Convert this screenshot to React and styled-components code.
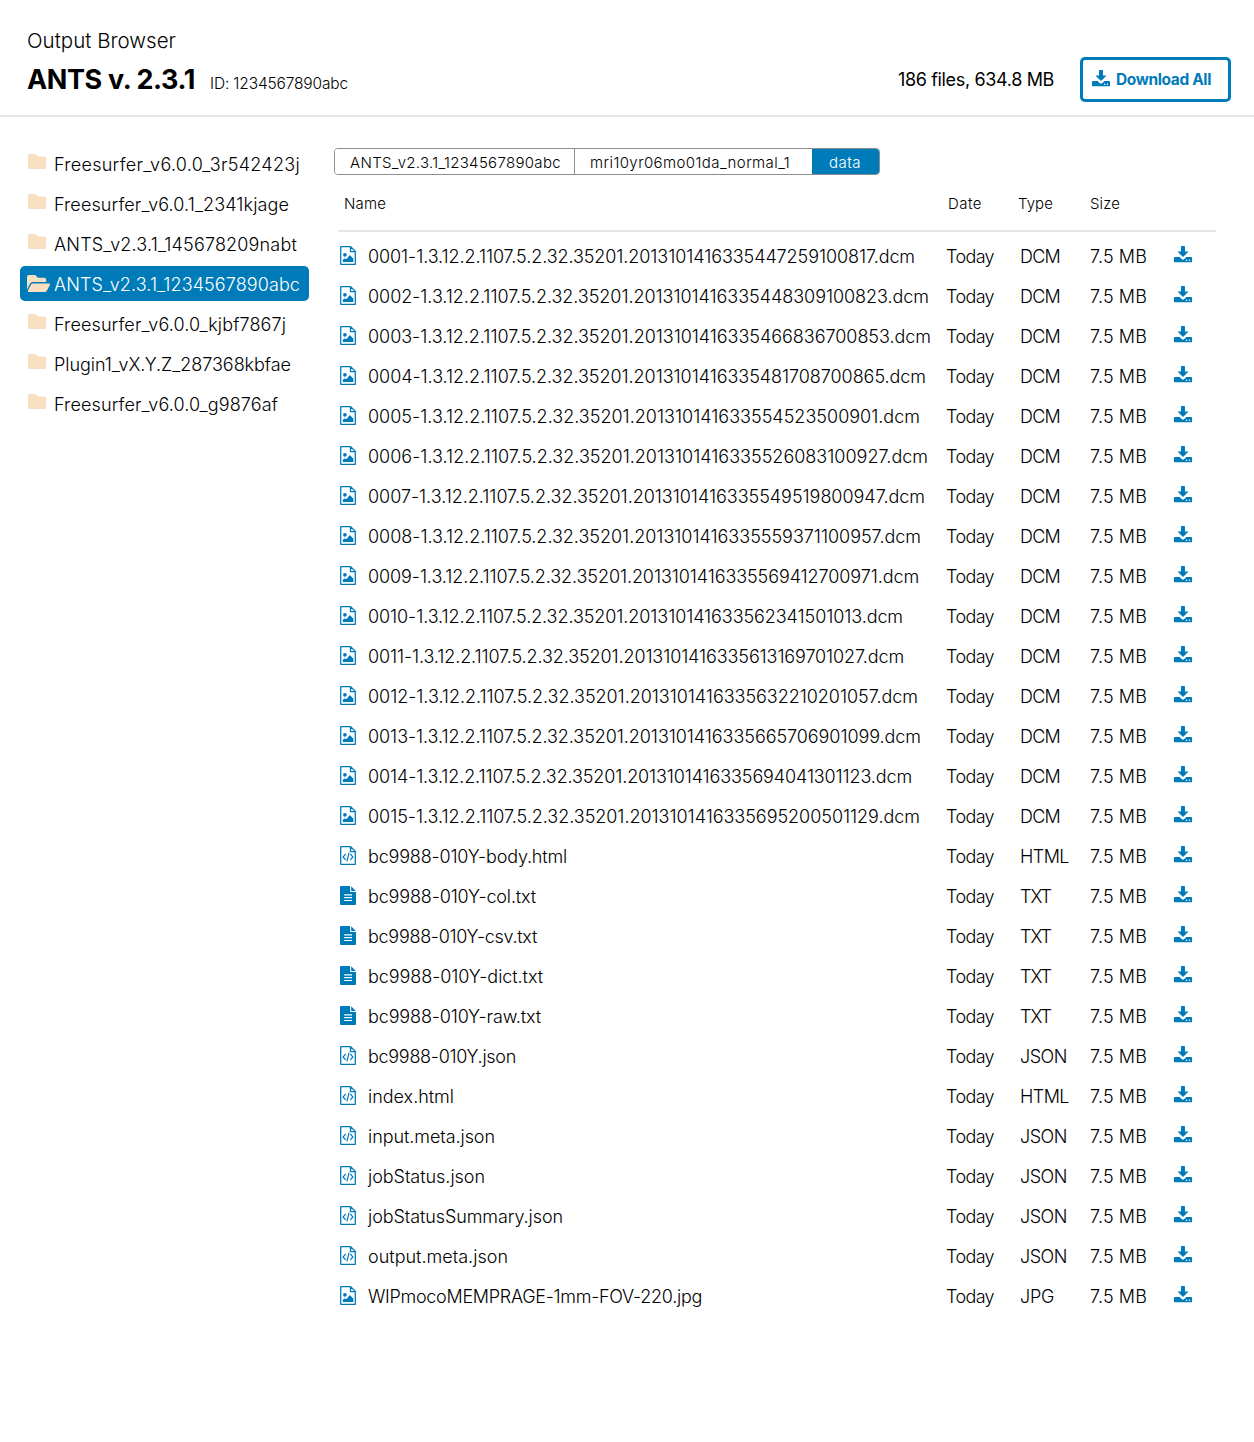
import React, { useLayoutEffect, useRef, useState } from "react";
import styled, { createGlobalStyle, css } from "styled-components";
import { FaFolder, FaFolderOpen } from "react-icons/fa";

const BLUE = "#007bba";
const SAND = "#f7dfbf";
const LINE = "#e6e6e6";

const GlobalStyle = createGlobalStyle`
  * { box-sizing: border-box; }
  body {
    margin: 0;
    background: #fff;
    color: #000;
    font-family: Inter, "Noto Sans", sans-serif;
  }
`;

const Page = styled.div`
  width: 1254px;
  min-height: 1442px;
  background: #fff;
`;

const Label = styled.span`
  display: inline-block;
  justify-self: start;
  padding-top: 2px;
  white-space: nowrap;
  font-size: ${(p) => p.$size || 18}px;
  font-weight: ${(p) => p.$weight || 300};
  line-height: ${(p) => p.$line || 24}px;
`;

function Tracked({ span, children, ...rest }) {
  const ref = useRef(null);
  const [spacing, setSpacing] = useState(0);
  useLayoutEffect(() => {
    const node = ref.current;
    node.style.letterSpacing = "0px";
    const natural = node.getBoundingClientRect().width;
    const next = (span - 1 - natural) / children.length;
    node.style.letterSpacing = `${next}px`;
    setSpacing(next);
  }, [span, children]);
  return (
    <Label ref={ref} style={{ letterSpacing: `${spacing}px` }} {...rest}>
      {children}
    </Label>
  );
}

const Header = styled.header`
  display: flex;
  justify-content: space-between;
  height: 117px;
  padding: 27px 23px 0 27px;
  border-bottom: 2px solid ${LINE};
`;

const Titles = styled.div`
  display: flex;
  flex-direction: column;
`;

const TitleRow = styled.div`
  display: flex;
  align-items: baseline;
  gap: 15px;
  margin-top: 9px;
`;

const Summary = styled.div`
  display: flex;
  align-items: center;
  gap: 26px;
  height: 46px;
  margin-top: 29px;
`;

const DownloadAll = styled.button`
  display: flex;
  align-items: center;
  gap: 6px;
  width: 151px;
  height: 45px;
  padding: 0 0 0 9px;
  border: 3px solid ${BLUE};
  border-radius: 5px;
  background: #fff;
  color: ${BLUE};
  font-family: inherit;
`;

const iconBox = css`
  display: block;
  flex: none;
  color: ${(p) => p.$color || BLUE};
`;

const DownloadSvg = styled.svg`
  ${iconBox}
  width: 18px;
  height: 17px;
  margin-bottom: ${(p) => p.$lift || 0}px;
`;

function DownloadIcon({ lift }) {
  return (
    <DownloadSvg viewBox="0 0 18 17" $lift={lift}>
      <path
        fill="currentColor"
        d="M7 .7q0-.6.6-.6h2.8q.6 0 .6.6v4.7h2.9q.8 0 .2.6L9.5 10.6q-.5.5-1 0L3.9 6q-.6-.6.2-.6H7z"
      />
      <path
        fill="currentColor"
        d="M.9 11h4.6l2.2 2.1q1.3 1.1 2.6 0L12.5 11h4.6q.9 0 .9.9v3.5q0 .9-.9.9H.9q-.9 0-.9-.9v-3.5Q0 11 .9 11z"
      />
      <circle cx="12.5" cy="14.3" r=".75" fill="#fff" />
      <circle cx="15.4" cy="14.3" r=".75" fill="#fff" />
    </DownloadSvg>
  );
}

const FileSvg = styled.svg`
  ${iconBox}
  width: 16px;
  height: 19px;
  margin-bottom: 1px;
`;

function Sheet() {
  return (
    <path
      d="M1.2.7h9.5l4.6 4.7v12.9H1.2Q.7 18.3.7 17.8V1.2Q.7.7 1.2.7zM10.5.9v4.8h4.7"
      fill="none"
      stroke="currentColor"
      strokeWidth="1.3"
      strokeLinejoin="round"
    />
  );
}

function ImageIcon() {
  return (
    <FileSvg viewBox="0 0 16 19">
      <Sheet />
      <circle cx="4.9" cy="8.8" r="1.9" fill="currentColor" />
      <path
        fill="currentColor"
        d="M2.8 16v-2.3l2-1.4 1.6 1L9.3 9.6q.5-.5 1 0l3 2.9V16z"
      />
    </FileSvg>
  );
}

function CodeIcon() {
  return (
    <FileSvg viewBox="0 0 16 19">
      <Sheet />
      <path
        d="M5.4 8.4 3.1 11l2.3 2.6M10.6 8.4l2.3 2.6-2.3 2.6M9 7 7 15"
        fill="none"
        stroke="currentColor"
        strokeWidth="1.15"
        strokeLinecap="round"
        strokeLinejoin="round"
      />
    </FileSvg>
  );
}

function TextIcon() {
  return (
    <FileSvg viewBox="0 0 16 19">
      <path
        fill="currentColor"
        d="M.9 0h9.2v5.2q0 .8.8.8H16v12.1q0 .9-.9.9H.9Q0 19 0 18.1V.9Q0 0 .9 0z"
      />
      <path fill="currentColor" d="M11.2.2 15.8 4.9h-4.6z" />
      <path stroke="#fff" strokeWidth="1.2" d="M4.2 8.9h7.8M4.2 11.7h7.8M4.2 14.5h7.8" />
    </FileSvg>
  );
}

const stretch = { preserveAspectRatio: "none" };

const ClosedFolder = styled(FaFolder).attrs({
  ...stretch,
  viewBox: "0 64 512 384",
})`
  ${iconBox}
  width: 18px;
  height: 15px;
  margin: 0 0 4px 1px;
`;

const OpenFolder = styled(FaFolderOpen).attrs({
  ...stretch,
  viewBox: "0 64 576 384",
})`
  ${iconBox}
  width: 23px;
  height: 17px;
  margin-top: -1px;
`;

const Body = styled.main`
  display: flex;
  padding-top: 29px;
`;

const Sidebar = styled.nav`
  display: flex;
  flex-direction: column;
  gap: 5px;
  width: 289px;
  margin-left: 20px;
`;

const Folder = styled.div`
  display: flex;
  align-items: center;
  height: 35px;
  padding-left: 7px;
  border-radius: 5px;
  background: ${(p) => (p.$active ? BLUE : "transparent")};
  color: ${(p) => (p.$active ? "#fff" : "inherit")};
`;

const FolderGlyph = styled.div`
  width: 27px;
`;

const Content = styled.section`
  width: 882px;
  margin: 2px 0 0 25px;
`;

const Crumbs = styled.div`
  display: flex;
  width: 546px;
  height: 27px;
  border: 1px solid #8b8d8f;
  border-radius: 4px;
  overflow: hidden;
`;

const Crumb = styled.div`
  display: flex;
  align-items: center;
  width: ${(p) => p.$width}px;
  padding-left: ${(p) => p.$pad}px;
  border-right: ${(p) => (p.$divided ? "1px solid #8b8d8f" : "none")};
  background: ${(p) => (p.$active ? BLUE : "#fff")};
  color: ${(p) => (p.$active ? "#fff" : "inherit")};
`;

const Table = styled.div`
  margin-left: 4px;
  width: 878px;
`;

const HeadRow = styled.div`
  display: grid;
  grid-template-columns: 604px 70px 72px 100px;
  align-items: center;
  height: 57px;
  padding-left: 6px;
  border-bottom: 2px solid ${LINE};
`;

const Rows = styled.div`
  padding-top: 4px;
`;

const Row = styled.div`
  display: grid;
  grid-template-columns: 608px 74px 70px 84px 18px;
  align-items: center;
  height: 40px;
`;

const NameCell = styled.div`
  display: flex;
  align-items: center;
  gap: 12px;
  padding-left: 2px;
`;

const folders = [
  ["Freesurfer_v6.0.0_3r542423j", 247],
  ["Freesurfer_v6.0.1_2341kjage", 236],
  ["ANTS_v2.3.1_145678209nabt", 244],
  ["ANTS_v2.3.1_1234567890abc", 247, true],
  ["Freesurfer_v6.0.0_kjbf7867j", 233],
  ["Plugin1_vX.Y.Z_287368kbfae", 238],
  ["Freesurfer_v6.0.0_g9876af", 225],
];

const files = [
  ["0001-1.3.12.2.1107.5.2.32.35201.2013101416335447259100817.dcm", 548, "DCM"],
  ["0002-1.3.12.2.1107.5.2.32.35201.2013101416335448309100823.dcm", 562, "DCM"],
  ["0003-1.3.12.2.1107.5.2.32.35201.2013101416335466836700853.dcm", 564, "DCM"],
  ["0004-1.3.12.2.1107.5.2.32.35201.2013101416335481708700865.dcm", 559, "DCM"],
  ["0005-1.3.12.2.1107.5.2.32.35201.201310141633554523500901.dcm", 553, "DCM"],
  ["0006-1.3.12.2.1107.5.2.32.35201.2013101416335526083100927.dcm", 561, "DCM"],
  ["0007-1.3.12.2.1107.5.2.32.35201.2013101416335549519800947.dcm", 558, "DCM"],
  ["0008-1.3.12.2.1107.5.2.32.35201.2013101416335559371100957.dcm", 554, "DCM"],
  ["0009-1.3.12.2.1107.5.2.32.35201.2013101416335569412700971.dcm", 552, "DCM"],
  ["0010-1.3.12.2.1107.5.2.32.35201.201310141633562341501013.dcm", 536, "DCM"],
  ["0011-1.3.12.2.1107.5.2.32.35201.2013101416335613169701027.dcm", 537, "DCM"],
  ["0012-1.3.12.2.1107.5.2.32.35201.2013101416335632210201057.dcm", 551, "DCM"],
  ["0013-1.3.12.2.1107.5.2.32.35201.2013101416335665706901099.dcm", 554, "DCM"],
  ["0014-1.3.12.2.1107.5.2.32.35201.2013101416335694041301123.dcm", 545, "DCM"],
  ["0015-1.3.12.2.1107.5.2.32.35201.2013101416335695200501129.dcm", 553, "DCM"],
  ["bc9988-010Y-body.html", 200, "HTML"],
  ["bc9988-010Y-col.txt", 169, "TXT"],
  ["bc9988-010Y-csv.txt", 170, "TXT"],
  ["bc9988-010Y-dict.txt", 176, "TXT"],
  ["bc9988-010Y-raw.txt", 174, "TXT"],
  ["bc9988-010Y.json", 149, "JSON"],
  ["index.html", 87, "HTML"],
  ["input.meta.json", 128, "JSON"],
  ["jobStatus.json", 118, "JSON"],
  ["jobStatusSummary.json", 196, "JSON"],
  ["output.meta.json", 141, "JSON"],
  ["WIPmocoMEMPRAGE-1mm-FOV-220.jpg", 335, "JPG"],
];

const types = {
  DCM: { Icon: ImageIcon, span: 41 },
  JPG: { Icon: ImageIcon, span: 35 },
  HTML: { Icon: CodeIcon, span: 50 },
  JSON: { Icon: CodeIcon, span: 48 },
  TXT: { Icon: TextIcon, span: 32 },
};

function FileRow({ name, span, type }) {
  const { Icon, span: typeSpan } = types[type];
  return (
    <Row>
      <NameCell>
        <Icon />
        <Tracked span={span}>{name}</Tracked>
      </NameCell>
      <Tracked span={49}>Today</Tracked>
      <Tracked span={typeSpan}>{type}</Tracked>
      <Tracked span={58}>7.5 MB</Tracked>
      <DownloadIcon lift={3} />
    </Row>
  );
}

export default function App() {
  return (
    <Page>
      <GlobalStyle />
      <Header>
        <Titles>
          <div>
            <Tracked span={150} $size={20.5}>Output Browser</Tracked>
          </div>
          <TitleRow>
            <Tracked span={169} $size={27} $weight={700} $line={32}>ANTS v. 2.3.1</Tracked>
            <Tracked span={139} $size={15.5}>ID: 1234567890abc</Tracked>
          </TitleRow>
        </Titles>
        <Summary>
          <Tracked span={157} $size={18} $weight={400}>186 files, 634.8 MB</Tracked>
          <DownloadAll>
            <DownloadIcon lift={1} />
            <Tracked span={96} $size={15.5} $weight={700}>Download All</Tracked>
          </DownloadAll>
        </Summary>
      </Header>
      <Body>
        <Sidebar>
          {folders.map(([name, span, active]) => (
            <Folder key={name} $active={active}>
              <FolderGlyph>
                {active ? <OpenFolder $color={SAND} /> : <ClosedFolder $color={SAND} />}
              </FolderGlyph>
              <Tracked span={span}>{name}</Tracked>
            </Folder>
          ))}
        </Sidebar>
        <Content>
          <Crumbs>
            <Crumb $width={240} $pad={15} $divided>
              <Tracked span={212} $size={15}>ANTS_v2.3.1_1234567890abc</Tracked>
            </Crumb>
            <Crumb $width={237} $pad={15}>
              <Tracked span={201} $size={15}>mri10yr06mo01da_normal_1</Tracked>
            </Crumb>
            <Crumb $width={67} $pad={17} $active>
              <Tracked span={33} $size={15}>data</Tracked>
            </Crumb>
          </Crumbs>
          <Table>
            <HeadRow>
              <Tracked span={43} $size={15}>Name</Tracked>
              <Tracked span={35} $size={15}>Date</Tracked>
              <Tracked span={36} $size={15}>Type</Tracked>
              <Tracked span={31} $size={15}>Size</Tracked>
            </HeadRow>
            <Rows>
              {files.map(([name, span, type]) => (
                <FileRow key={name} name={name} span={span} type={type} />
              ))}
            </Rows>
          </Table>
        </Content>
      </Body>
    </Page>
  );
}
